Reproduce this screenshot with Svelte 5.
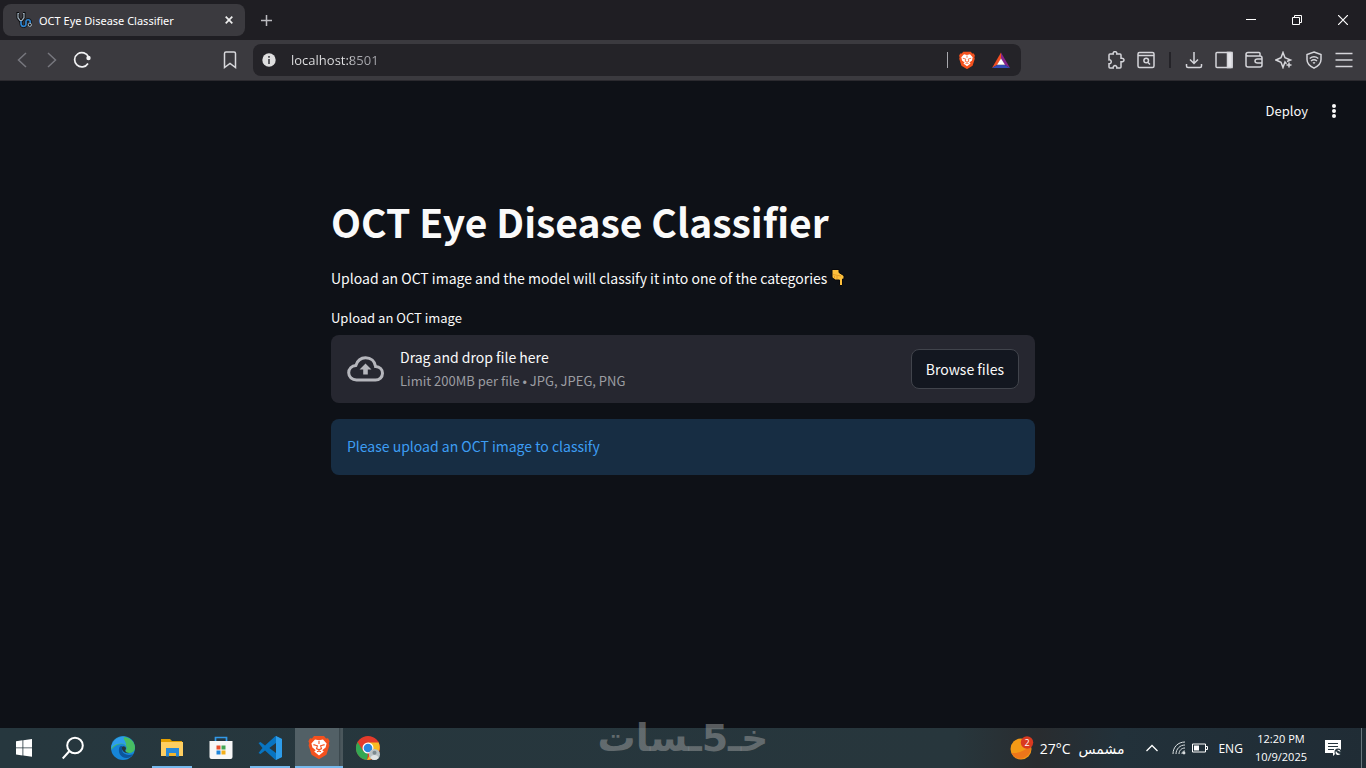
<script lang="ts">
	let address = $state('localhost:8501');
	let picker: HTMLInputElement;

	const apps = [
		{ id: 'start', label: 'Start', state: '' },
		{ id: 'search', label: 'Search', state: '' },
		{ id: 'edge', label: 'Microsoft Edge', state: '' },
		{ id: 'explorer', label: 'File Explorer', state: 'open' },
		{ id: 'store', label: 'Microsoft Store', state: '' },
		{ id: 'code', label: 'Visual Studio Code', state: 'open' },
		{ id: 'brave', label: 'Brave', state: 'active' },
		{ id: 'chrome', label: 'Google Chrome', state: '' }
	];
</script>

{#snippet lion()}
	<path fill="#f4511e" d="M7 1h10l2 2.4 2-.2 1.6 3-.8 2 .6 2.2-3 9.4-7.4 4.4-7.4-4.4-3-9.4.6-2.2-.8-2 1.6-3 2 .2z" />
	<path fill="#fff" d="M8 4.4l4 .8 4-.8 3.6 4-1 4.2-3.4 2.6 1.6 1.4-4.8 3.8-4.8-3.8 1.6-1.4-3.4-2.6-1-4.2z" />
	<path fill="none" stroke="#f4511e" stroke-width="1.1" d="M6.4 9.6l4 1.2-.9 2.8 2.5 1.2 2.5-1.2-.9-2.8 4-1.2M12 6v3M10 16.8l2-.8 2 .8" />
{/snippet}

<div class="screen">
	<div class="tabs">
		<div class="tab">
			<svg width="16" height="16" viewBox="0 0 16 16" fill="none">
				<path stroke="#0b0c0e" stroke-width="3" d="M3 1.5H2v4.2l2.2 3h1.6L8 5.7V1.5H7" />
				<path stroke="#9fb0bd" stroke-width="1.2" d="M3 1.5H2v4.2l2.2 3h1.6L8 5.7V1.5H7" />
				<path stroke="#0b0c0e" stroke-width="3" d="M5 9v2.6c0 3.8 5 3.6 5 .4V9.6c0-2.6 4.2-2.4 4.2.2v1.6" />
				<path stroke="#2f86d2" stroke-width="1.7" d="M5 9v2.6c0 3.8 5 3.6 5 .4V9.6c0-2.6 4.2-2.4 4.2.2v1.6" />
				<circle cx="13.8" cy="12.8" r="1.6" fill="#111" stroke="#a9bac6" />
			</svg>
			<span class="tab-title">OCT Eye Disease Classifier</span>
			<button class="plain close" aria-label="Close tab">
				<svg width="8" height="8" viewBox="0 0 8 8"><path stroke="#eee" stroke-width="1.7" d="M.7.7l6.6 6.6M7.3.7L.7 7.3" /></svg>
			</button>
		</div>
		<button class="plain new" aria-label="New tab">
			<svg width="11" height="11" viewBox="0 0 11 11"><path stroke="#bbbbc0" stroke-width="1.5" d="M5.5 0v11M0 5.5h11" /></svg>
		</button>
		<div class="window">
			<button class="plain" aria-label="Minimize"><svg width="10" height="10"><path stroke="#fff" d="M0 4.5h10" /></svg></button>
			<button class="plain" aria-label="Restore"><svg width="10" height="10" fill="none" stroke="#fff"><path d="M.5 2.5h7v7h-7zM2.5 2.5V.5h7v7h-2" /></svg></button>
			<button class="plain" aria-label="Close"><svg width="10" height="10"><path stroke="#fff" stroke-width="1.2" d="M0 0l10 10M10 0L0 10" /></svg></button>
		</div>
	</div>

	<div class="toolbar">
		<div class="nav">
			<button class="plain" aria-label="Back"><svg width="18" height="18" fill="none" stroke="#77777e" stroke-width="1.5"><path d="M13 2L5.5 9l7.5 7" /></svg></button>
			<button class="plain" aria-label="Forward"><svg width="18" height="18" fill="none" stroke="#77777e" stroke-width="1.5"><path d="M5 2l7.5 7L5 16" /></svg></button>
			<button class="plain" aria-label="Reload">
				<svg width="18" height="18"><path fill="none" stroke="#f1f1f3" stroke-width="1.7" d="M15 12.5A7.2 7.2 0 1 1 15.5 6" /><circle cx="15.5" cy="7" r="2.2" fill="#f1f1f3" /></svg>
			</button>
		</div>
		<button class="plain bookmark" aria-label="Bookmark">
			<svg width="14" height="18" fill="none" stroke="#d8d8dc" stroke-width="1.5"><path d="M1.5 2.5q0-1.5 1.5-1.5h8q1.5 0 1.5 1.5v14L7 12.5l-5.5 4z" /></svg>
		</button>
		<div class="address">
			<svg width="14" height="14"><circle cx="7" cy="7" r="6.7" fill="#dededf" /><path stroke="#444449" stroke-width="1.7" d="M7 3v1.7M7 6v5" /></svg>
			<input type="text" aria-label="Address" bind:value={address} />
			<i></i>
			<button class="plain" aria-label="Brave Shields"><svg width="18" height="18" viewBox="0 0 24 24">{@render lion()}</svg></button>
			<button class="plain" aria-label="Rewards">
				<svg width="18" height="17" viewBox="0 0 18 17">
					<path fill="#f04e23" d="M9 .5L0 16l5-3 4-6z" /><path fill="#87238b" d="M9 .5L18 16l-5-3-4-6z" />
					<path fill="#344bb5" d="M0 16h18l-5-3H5z" /><path fill="#fff" d="M9 6.5L5 12.8h8z" />
				</svg>
			</button>
		</div>
		<div class="tools">
			<button class="plain" aria-label="Extensions"><svg viewBox="0 0 18 18"><path d="M2 4q0-1 1-1h3.2C5.5-.2 10.5-.2 9.8 3H13q1 0 1 1v3.2c4-.7 4 4.3 0 3.6V16q0 1-1 1H9.8c.5-3.2-4-3.2-3.6 0H3q-1 0-1-1v-3.2c3 .2 3-4.3 0-4z" /></svg></button>
			<button class="plain" aria-label="Search tabs"><svg viewBox="0 0 18 18"><rect x="1" y="1.5" width="16" height="15" rx="1.5" /><path d="M1 4.5h16M11 11.5l2 2" /><circle cx="9.2" cy="9.5" r="2.3" /></svg></button>
			<span class="split"></span>
			<button class="plain" aria-label="Downloads"><svg viewBox="0 0 18 18"><path d="M9 1v11M5 8.5l4 4 4-4M1.5 13v2q0 1.5 1.5 1.5h12q1.5 0 1.5-1.5v-2" /></svg></button>
			<button class="plain" aria-label="Sidebar"><svg viewBox="0 0 18 18"><rect x="1" y="1.5" width="16" height="15" rx="1" /><path fill="#e6e6ea" d="M12.5 1.5H17v15h-4.5z" /></svg></button>
			<button class="plain" aria-label="Wallet"><svg viewBox="0 0 18 18"><path d="M15 5V2.5q0-1-1-1H3q-2 0-2 2V14q0 2 2 2h12q2 0 2-2V7q0-2-2-2H3Q1.5 5 1 3.5M17 8h-4.5q-2.5 0-2.5 2t2.5 2H17" /></svg></button>
			<button class="plain" aria-label="Leo AI"><svg viewBox="0 0 18 18"><path d="M11.5 12.7L10 11l-2 5.5-2-5.3L1 9l5-2.2 2-5.3 2 5.3L15.5 9 12 10.5M14 11.5v5M11.5 14h5" /></svg></button>
			<button class="plain" aria-label="VPN"><svg viewBox="0 0 18 18"><path d="M9 1l7 2.5v5c0 4.5-3.5 7-7 8.7-3.5-1.7-7-4.2-7-8.7v-5zM4.7 7.5Q9 4.2 13.3 7.5M6 10Q9 7.7 12 10M8 12.2q1-.7 2 0" /></svg></button>
			<button class="plain" aria-label="Menu"><svg viewBox="0 0 18 18"><path d="M.5 2.5h17M.5 9h17M.5 15.5h17" /></svg></button>
		</div>
	</div>

	<main>
		<header>
			<button class="plain deploy">Deploy</button>
			<button class="plain" aria-label="More options">
				<svg width="6" height="16" fill="#fafafa"><circle cx="3" cy="3" r="2" /><circle cx="3" cy="8" r="2" /><circle cx="3" cy="13" r="2" /></svg>
			</button>
		</header>
		<section>
			<h1>OCT Eye Disease Classifier</h1>
			<p>
				Upload an OCT image and the model will classify it into one of the categories
				<svg width="14" height="18" viewBox="0 0 14 18" role="img" aria-label="pointing down">
					<path fill="#fdbf3c" stroke="#08090c" d="M1 .5h7v3l5 3.2V10h-1.5v6.5h-3V11H4L1 8.5z" />
					<path stroke="#d88d20" stroke-width=".7" d="M3.5 7v3M6 7v3M2 5.5l8 1.5" />
				</svg>
			</p>
			<label for="oct-file">Upload an OCT image</label>
			<div class="dropzone">
				<input id="oct-file" type="file" accept=".jpg,.jpeg,.png" bind:this={picker} hidden />
				<svg width="37" height="26" viewBox="0 0 37 26" fill="none">
					<path stroke="#b5b6bc" stroke-width="3" d="M28.5 24H9.5C5 24 1.7 20.9 1.7 16.8c0-4 3-7.1 7.2-7.4C10.5 4.5 14 1.8 18.5 1.8c5.4 0 9.3 3.6 10.1 8.7 4.2.2 6.9 3 6.9 6.7 0 3.9-3 6.8-7 6.8z" />
					<path fill="#b5b6bc" d="M18.5 7.5l6 6h-3.7v5h-4.6v-5h-3.7z" />
				</svg>
				<div class="hint">
					<span>Drag and drop file here</span>
					<small>Limit 200MB per file • JPG, JPEG, PNG</small>
				</div>
				<button class="browse" onclick={() => picker.click()}>Browse files</button>
			</div>
			<div class="alert" role="status">Please upload an OCT image to classify</div>
		</section>
	</main>

	<footer>
		<nav>
			{#each apps as app}
				<button class="plain app {app.state}" aria-label={app.label}>
					<svg width="24" height="24" viewBox="0 0 24 24">
						{#if app.id === 'start'}
							<path fill="#fff" d="M3 5.3l6.5-1v7.2H3zM10.3 4.2L19 3v8.5h-8.7zM3 12.3h6.5v7.2L3 18.5zM10.3 12.3H19v8.5l-8.7-1.2z" />
						{:else if app.id === 'search'}
							<circle cx="13" cy="9.5" r="7.8" fill="none" stroke="#fff" stroke-width="2" /><path stroke="#fff" stroke-width="2" d="M7.5 15L.7 22.5" />
						{:else if app.id === 'edge'}
							<circle cx="12" cy="12" r="12" fill="#1685d8" />
							<path fill="#47bd62" d="M14 1c6 1 10 5.5 10 10.5 0 4-3 5.5-6 5.5-3.5 0-4-1.5-3-3 2-3-1-6-4-6-5 0-9 3-10.5 6C0 5 7 0 14 1z" />
							<path fill="#2e9cec" d="M.2 13C0 5 7-.8 15 1.2 9 1 16 5 15 10c-1-2-3-2.6-5-2.5C5 7.7 1.5 10 .2 13z" />
							<path fill="#0c559c" d="M8.5 11c-2 5 1 11 7 11 3 0 5-1.5 6.5-4-2 1-5 1.3-7.3.3C11 17 10.5 14 11.5 11.5c.5-1.5-2-2-3-.5z" />
							<path fill="#26353d" d="M11 11c1-1.5 4-.5 4 1.5 0 1-1 1.5-.7 2.5.4 1.2 2 2 3.7 2-3 1-8-2-7-6z" />
						{:else if app.id === 'explorer'}
							<path fill="#e5a000" d="M1 3h9l2 2h10v7H1z" /><path fill="#ffcf61" d="M1 6h22v14H1z" />
							<path fill="#2889d8" d="M6 12h13v8.5h-3V17H9v3.5H6z" /><path fill="#f2b52c" d="M9 17h7v3H9z" />
						{:else if app.id === 'store'}
							<path fill="none" stroke="#3299e8" stroke-width="1.7" d="M6.5 6V1.5h11V6" /><path fill="#f7f7f7" d="M.5 5h23v16q0 2-2 2h-19q-2 0-2-2z" />
							<path fill="#e94e2c" d="M7.5 9.5h4v4h-4z" /><path fill="#42a653" d="M12.5 9.5h4v4h-4z" /><path fill="#2086db" d="M7.5 14.5h4v4h-4z" /><path fill="#f2ae19" d="M12.5 14.5h4v4h-4z" />
						{:else if app.id === 'code'}
							<path fill="#0874c1" d="M17.5 0L7 9.5 2.5 6 .5 7l4 5-4 5 2 1L7 14.5 17.5 24l6.5-3V3zM18 7v10l-6.7-5z" /><path fill="#2d9ce9" d="M18 0l6 3v18l-6 3z" />
						{:else if app.id === 'brave'}
							{@render lion()}
						{:else}
							<circle cx="12" cy="12" r="12" fill="#e43b2b" />
							<path fill="#33a853" d="M1.6 6l5.5 9L12 18l-1 6C1 23-2.5 13 1.6 6z" /><path fill="#f8bc24" d="M12 6.5h10.7C26 14 21 23.5 11 24l5.5-9.5z" />
							<circle cx="12" cy="12" r="5.5" fill="#fff" /><circle cx="12" cy="12" r="4.3" fill="#2b86df" />
							<circle cx="18.5" cy="18.5" r="5.5" fill="#b9c1c4" /><circle cx="18.5" cy="16.8" r="2" fill="#7d898f" /><path fill="#e1e4e5" d="M14.5 22c.5-4 7.5-4 8 0-2 2.5-6 2.5-8 0z" />
						{/if}
					</svg>
				</button>
			{/each}
		</nav>
		<div class="tray">
			<svg width="24" height="24" viewBox="0 0 24 24">
				<circle cx="11" cy="13" r="10.5" fill="#f39a16" /><path fill="#ed761a" d="M1.5 17Q13 18 20.5 8.5C24 20 8 29 1.5 17z" />
				<circle cx="17" cy="6.5" r="6.2" fill="#d93a20" /><text x="17" y="10" text-anchor="middle" font-size="9" fill="#fff">2</text>
			</svg>
			<span class="weather">27°C</span>
			<span class="weather" lang="ar" dir="rtl">مشمس</span>
			<button class="plain chevron" aria-label="Show hidden icons"><svg width="12" height="8"><path fill="none" stroke="#fff" stroke-width="1.3" d="M.5 7L6 1.5 11.5 7" /></svg></button>
			<svg width="14" height="14" fill="none" stroke="#dce1e3"><path d="M1 13C1 6 6 1 13 1M4 13c0-5 4-9 9-9M7 13c0-3.5 2.5-6 6-6M10 13c0-2 1-3 3-3" /><circle cx="12" cy="12" r="1" fill="#fff" /></svg>
			<svg width="16" height="10" fill="none" stroke="#fff"><path d="M.5 1h13v8H.5zM14 3.5h1.5v3H14" /><path fill="#fff" stroke="none" d="M2 2.5h5v5H2z" /></svg>
			<span class="language">ENG</span>
			<time><span>12:20 PM</span><span>10/9/2025</span></time>
			<button class="plain notices" aria-label="Notifications">
				<svg width="17" height="17"><path fill="#fff" d="M0 0h16v13h-5l-3 3v-3H0z" /><path stroke="#26353d" d="M3 3.5h10M3 6.5h10M3 9.5h6" /><circle cx="13" cy="12" r="3.5" fill="#26353d" /><path fill="#fff" d="M15.5 14c-3 2.5-6 0-4.5-3 1 2 2.5 3 4.5 3zM12 10q3-1 3.5 2z" /></svg>
			</button>
		</div>
		<div class="watermark" lang="ar" dir="rtl">خـ5ـسات</div>
	</footer>
</div>

<style>
	:global(body) {
		background: #0e1117;
	}

	.screen {
		display: flex;
		flex-direction: column;
		min-height: 100vh;
		color: #fff;
		font-family: 'Open Sans', 'DejaVu Sans', sans-serif;
		font-size: 12px;
	}

	svg {
		display: block;
		flex: none;
	}

	.plain {
		display: flex;
		align-items: center;
		justify-content: center;
		padding: 0;
		border: 0;
		background: none;
		color: inherit;
		font: inherit;
		cursor: pointer;
	}

	.tabs {
		display: flex;
		align-items: center;
		height: 40px;
		padding-left: 3px;
		background: #1f1e23;
	}

	.tab {
		display: flex;
		align-items: center;
		gap: 7px;
		box-sizing: border-box;
		width: 242px;
		height: 32px;
		padding: 0 8px 0 13px;
		border-radius: 8px;
		background: #3b3a3f;
	}

	.tab-title {
		font-family: 'Noto Sans', sans-serif;
		font-size: 11px;
		white-space: nowrap;
	}

	.close {
		width: 16px;
		height: 24px;
		margin-left: auto;
	}

	.new {
		width: 42px;
		height: 32px;
	}

	.window {
		display: flex;
		margin-left: auto;
	}

	.window button {
		width: 46px;
		height: 40px;
	}

	.toolbar {
		display: flex;
		align-items: center;
		height: 40px;
		padding: 0 13px 0 8px;
		border-bottom: 1px solid #2b2a2f;
		background: #3b3a3f;
	}

	.nav {
		display: flex;
		gap: 2px;
		margin-right: 34px;
	}

	.nav button,
	.bookmark {
		width: 28px;
		height: 28px;
	}

	.bookmark {
		margin-left: auto;
	}

	.address {
		display: flex;
		align-items: center;
		box-sizing: border-box;
		flex: 0 1 768px;
		height: 32px;
		margin-left: 9px;
		padding: 0 11px 0 9px;
		border-radius: 8px;
		background: #242328;
	}

	.address input {
		flex: 1;
		min-width: 0;
		margin-left: 15px;
		padding: 0;
		border: 0;
		outline: 0;
		background: linear-gradient(to right, #e4e4e6 60px, #a9a9af 60px);
		background-clip: text;
		color: transparent;
		font: 13px 'Open Sans', sans-serif;
	}

	.address i {
		width: 1px;
		height: 16px;
		background: #a8a8ad;
	}

	.address button {
		margin-left: 10px;
	}

	.address button:last-child {
		margin-left: 16px;
	}

	.tools {
		display: flex;
		align-items: center;
		gap: 12px;
		margin-left: auto;
	}

	.tools svg {
		width: 18px;
		height: 18px;
		fill: none;
		stroke: #d5d5da;
		stroke-width: 1.5;
	}

	.split {
		width: 2px;
		height: 16px;
		margin: 0 2px;
		background: #242328;
	}

	main {
		flex: 1;
		background: #0e1117;
		color: #fafafa;
		font-family: 'Noto Sans CJK KR', sans-serif;
		font-size: 14px;
		line-height: 24px;
	}

	header {
		display: flex;
		align-items: center;
		justify-content: flex-end;
		gap: 23px;
		height: 60px;
		padding-right: 29px;
	}

	.deploy {
		font-size: 13px;
	}

	section {
		max-width: 704px;
		margin: 0 auto;
		padding: 53px 16px 16px;
	}

	h1 {
		margin: 0 0 18px;
		font-size: 39px;
		font-weight: 700;
		line-height: 54px;
	}

	p {
		display: flex;
		align-items: center;
		gap: 4px;
		margin: 0 0 16px;
	}

	label {
		display: block;
		margin-bottom: 5px;
		font-size: 13px;
	}

	.dropzone {
		display: flex;
		align-items: center;
		gap: 16px;
		padding: 12px 16px;
		border-radius: 8px;
		background: #262730;
	}

	.hint {
		display: flex;
		flex: 1;
		flex-direction: column;
		gap: 4px;
		line-height: 20px;
	}

	.hint small {
		color: #9c9da2;
		font-size: 13px;
	}

	.browse {
		height: 40px;
		padding: 0 14px;
		border: 1px solid #41444c;
		border-radius: 8px;
		background: #131720;
		color: #fafafa;
		font: 14px 'Noto Sans CJK KR', sans-serif;
		cursor: pointer;
	}

	.alert {
		margin-top: 16px;
		padding: 15px 16px 17px;
		border-radius: 8px;
		background: #172d43;
		color: #3d9df3;
	}

	footer {
		position: relative;
		display: flex;
		justify-content: space-between;
		height: 40px;
		background: linear-gradient(to right, #26373e, #27363c 70%, #292c2f 76%, #22313a 82%, #202c35);
	}

	nav {
		display: flex;
		gap: 1px;
		padding-left: 1px;
	}

	.app {
		box-sizing: border-box;
		width: 48px;
		height: 40px;
	}

	.open {
		background: linear-gradient(#76b9ed, #76b9ed) bottom / 40px 2px no-repeat;
	}

	.active {
		border-bottom: 2px solid #76b9ed;
		background: linear-gradient(to right, #526066 44px, #37444a 44px, #4a575c 46px);
	}

	.tray {
		display: flex;
		align-items: center;
		padding-right: 10px;
		border-right: 1px solid #69767d;
		margin-right: 4px;
	}

	.tray > svg {
		margin-right: 6px;
	}

	.weather {
		margin-right: 8px;
		font-size: 14px;
	}

	.chevron {
		width: 32px;
		height: 40px;
		margin: 0 4px;
	}

	.language {
		margin: 0 12px 0 4px;
	}

	time {
		display: flex;
		flex-direction: column;
		align-items: center;
		font-size: 11px;
		line-height: 18px;
	}

	.notices {
		width: 36px;
		height: 40px;
		margin-left: 8px;
	}

	/* hangs over the top edge of the taskbar */
	.watermark {
		position: absolute;
		bottom: 6px;
		left: 50%;
		transform: translateX(-50%);
		color: #8b8f9099;
		font: bold 38px/48px 'DejaVu Sans', sans-serif;
		white-space: nowrap;
		pointer-events: none;
	}
</style>
